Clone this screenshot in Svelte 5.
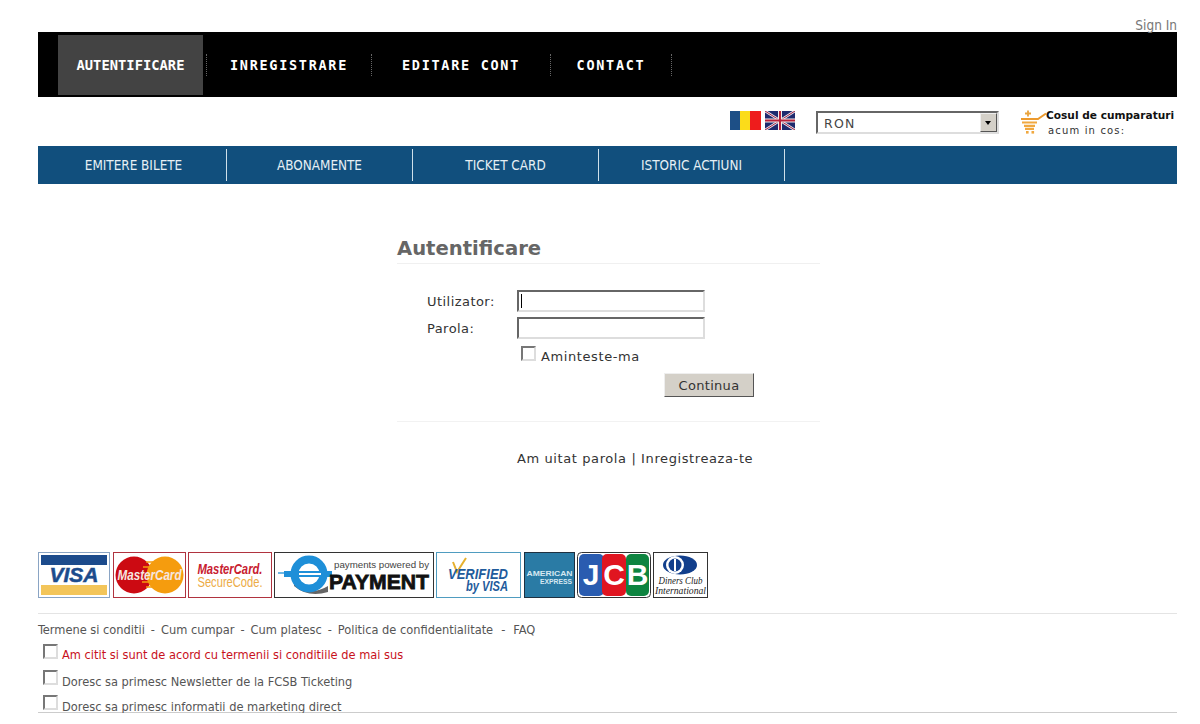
<script lang="ts">
    const mainTabs = [
        { label: 'AUTENTIFICARE', width: 145, active: true },
        { label: 'INREGISTRARE', width: 164, active: false },
        { label: 'EDITARE CONT', width: 178, active: false },
        { label: 'CONTACT', width: 120, active: false }
    ];
    const subTabs = ['EMITERE BILETE', 'ABONAMENTE', 'TICKET CARD', 'ISTORIC ACTIUNI'];
    const footerLinks = ['Termene si conditii', 'Cum cumpar', 'Cum platesc', 'Politica de confidentialitate', 'FAQ'];
    const checks = [
        { label: 'Am citit si sunt de acord cu termenii si conditiile de mai sus', warn: true },
        { label: 'Doresc sa primesc Newsletter de la FCSB Ticketing', warn: false },
        { label: 'Doresc sa primesc informatii de marketing direct', warn: false }
    ];
</script>

<div class="page">
    <div class="signin"><a href="#signin">Sign In</a></div>

    <nav class="topnav">
        {#each mainTabs as tab}
            <div class="toptab" class:active={tab.active} style="width: {tab.width}px">
                <a href="#tab">{tab.label}</a>
            </div>
            <i class="dots"></i>
        {/each}
    </nav>

    <div class="toolbar">
        <svg class="flag" width="31" height="19" viewBox="0 0 31 19">
            <rect width="11" height="19" fill="#1d4f86" />
            <rect x="10" width="11" height="19" fill="#fbdc1a" />
            <rect x="20" width="11" height="19" fill="#ee1c1c" />
        </svg>
        <svg class="flag uk" width="30" height="19" viewBox="0 0 30 19">
            <rect width="30" height="19" fill="#1e2a6e" />
            <path d="M0 0L30 19M30 0L0 19" stroke="#e8e8f0" stroke-width="2.6" />
            <path d="M0 0L30 19M30 0L0 19" stroke="#a02040" stroke-width="1" />
            <path d="M15 0V19M0 9.5H30" stroke="#eee" stroke-width="4" />
            <path d="M15 0V19M0 9.5H30" stroke="#b8203a" stroke-width="2" />
        </svg>
        <div class="currency">
            <span>RON</span>
            <b class="arrow"></b>
        </div>
        <svg class="cart" width="26" height="24" viewBox="0 0 26 24">
            <path d="M4 3.5H10M7 .5V6.5" stroke="#e9a33d" stroke-width="1.8" />
            <path d="M0 9H17L25 3.5" fill="none" stroke="#ec9a2e" stroke-width="2" />
            <path d="M1 12.5H16M3 15.8H14M4 18.8H13" stroke="#f0a840" stroke-width="2.2" />
            <rect x="5" y="21" width="2.6" height="2.6" fill="#f0a840" />
            <rect x="10.5" y="21" width="2.6" height="2.6" fill="#f0a840" />
        </svg>
        <div class="cartinfo">
            <strong>Cosul de cumparaturi</strong>
            <span>acum in cos:</span>
        </div>
    </div>

    <nav class="subnav">
        {#each subTabs as tab}
            <a href="#sub" class="subtab">{tab}</a>
        {/each}
    </nav>

    <main class="login">
        <h1>Autentificare</h1>
        <form class="fields">
            <label class="row">
                <span>Utilizator:</span>
                <input type="text" />
                <i class="caret"></i>
            </label>
            <label class="row">
                <span>Parola:</span>
                <input type="password" />
            </label>
            <label class="remember">
                <i class="box"></i>
                <span>Aminteste-ma</span>
            </label>
            <div class="actions">
                <button type="button">Continua</button>
            </div>
        </form>
        <p class="links"><a href="#forgot">Am uitat parola</a> | <a href="#register">Inregistreaza-te</a></p>
    </main>

    <div class="logos">
        <!-- Visa -->
        <svg width="73" height="46" viewBox="0 0 73 46">
            <rect x=".5" y=".5" width="71" height="45" fill="#fff" stroke="#8aa4c4" />
            <rect x="3" y="3" width="66" height="10" fill="#1c4b8c" />
            <rect x="3" y="33" width="66" height="10" fill="#f3c55a" />
            <text x="36" y="30" class="lg visa" text-anchor="middle">VISA</text>
        </svg>
        <!-- MasterCard -->
        <svg width="73" height="46" viewBox="0 0 73 46">
            <rect x=".5" y=".5" width="72" height="45" fill="#fff" stroke="#b0333f" />
            <circle cx="21" cy="23" r="18.5" fill="#cc0a12" />
            <circle cx="52" cy="23" r="18.5" fill="#f59c0e" />
            <path d="M33 10H40M30 15H40M29 30H40M33 35H40" stroke="#f59c0e" stroke-width="1.4" />
            <text x="36.5" y="28" class="lg mc" text-anchor="middle" textLength="64" lengthAdjust="spacingAndGlyphs">MasterCard</text>
        </svg>
        <!-- MasterCard SecureCode -->
        <svg width="84" height="46" viewBox="0 0 84 46">
            <rect x=".5" y=".5" width="83" height="45" fill="#fff" stroke="#b0333f" />
            <text x="42" y="22" class="lg sc red" text-anchor="middle" textLength="65" lengthAdjust="spacingAndGlyphs">MasterCard.</text>
            <text x="42" y="35" class="lg sc amber" text-anchor="middle" textLength="65" lengthAdjust="spacingAndGlyphs">SecureCode.</text>
        </svg>
        <!-- ePayment -->
        <svg width="160" height="46" viewBox="0 0 160 46">
            <rect x=".5" y=".5" width="159" height="45" fill="#fff" stroke="#333" />
            <path d="M4 21H16" stroke="#3c9fdc" stroke-width="1.5" />
            <path d="M20 30Q34 46 54 34L54 40Q34 46 20 34Z" fill="#666" />
            <circle cx="35" cy="22" r="14.5" fill="#fff" stroke="#1e8fd8" stroke-width="8" />
            <rect x="10" y="19" width="48" height="6" fill="#1e8fd8" />
            <rect x="25" y="21" width="22" height="2" fill="#fff" />
            <text x="155" y="16" class="lg pw" text-anchor="end" textLength="95" lengthAdjust="spacingAndGlyphs">payments powered by</text>
            <text x="155" y="37" class="lg pay" text-anchor="end" textLength="100" lengthAdjust="spacingAndGlyphs">PAYMENT</text>
        </svg>
        <!-- Verified by Visa -->
        <svg width="86" height="46" viewBox="0 0 86 46">
            <rect x=".5" y=".5" width="84" height="45" fill="#fff" stroke="#4f9cc0" />
            <path d="M17 10L21 20L30 6" fill="none" stroke="#e6b02e" stroke-width="2" />
            <text x="72" y="27" class="lg vbv" text-anchor="end" textLength="60" lengthAdjust="spacingAndGlyphs">VERIFIED</text>
            <text x="72" y="39" class="lg vbv" text-anchor="end" textLength="42" lengthAdjust="spacingAndGlyphs">by VISA</text>
        </svg>
        <!-- American Express -->
        <svg width="51" height="46" viewBox="0 0 51 46">
            <rect x=".5" y=".5" width="50" height="45" fill="#2a7ba5" stroke="#1e3040" />
            <text x="25.5" y="24" class="lg amex" text-anchor="middle" textLength="46" lengthAdjust="spacingAndGlyphs">AMERICAN</text>
            <text x="32" y="32" class="lg amex" text-anchor="middle" textLength="32" lengthAdjust="spacingAndGlyphs">EXPRESS</text>
        </svg>
        <!-- JCB -->
        <svg width="74" height="46" viewBox="0 0 74 46">
            <rect x=".5" y=".5" width="73" height="45" rx="4" fill="#fff" stroke="#333" />
            <rect x="2" y="2" width="25" height="42" rx="5" fill="#2a5cb0" />
            <rect x="25" y="2" width="24" height="42" rx="5" fill="#e01520" />
            <rect x="49" y="2" width="23" height="42" rx="5" fill="#0e8440" />
            <text x="14" y="33" class="lg jcb" text-anchor="middle">J</text>
            <text x="37" y="33" class="lg jcb" text-anchor="middle">C</text>
            <text x="60.5" y="33" class="lg jcb" text-anchor="middle">B</text>
        </svg>
        <!-- Diners Club -->
        <svg width="55" height="46" viewBox="0 0 55 46">
            <rect x=".5" y=".5" width="54" height="45" fill="#fff" stroke="#333" />
            <ellipse cx="27" cy="13" rx="17" ry="9.5" fill="#123f8c" />
            <circle cx="22" cy="13" r="9" fill="#fff" />
            <circle cx="22" cy="13" r="6.5" fill="#123f8c" />
            <rect x="21" y="7" width="2" height="12" fill="#fff" />
            <text x="27.5" y="32" class="lg dc" text-anchor="middle" textLength="44" lengthAdjust="spacingAndGlyphs">Diners Club</text>
            <text x="27.5" y="42" class="lg dc" text-anchor="middle" textLength="51" lengthAdjust="spacingAndGlyphs">International</text>
        </svg>
    </div>

    <footer class="foot">
        <div class="footlinks">
            {#each footerLinks as link, i}
                {#if i > 0}<span class="sep">-</span>{/if}
                <a href="#foot">{link}</a>
            {/each}
        </div>
        {#each checks as check}
            <label class="check" class:warn={check.warn}>
                <i class="box"></i>
                <span>{check.label}</span>
            </label>
        {/each}
    </footer>
</div>

<style>
    :global(body) {
        margin: 0;
        background: #fff;
        overflow: hidden;
    }
    a {
        color: inherit;
        text-decoration: none;
    }
    .page {
        width: 1139px;
        margin-left: 38px;
        font-family: "DejaVu Sans", Verdana, sans-serif;
    }
    .signin {
        height: 32px;
        box-sizing: border-box;
        padding-top: 17px;
        text-align: right;
        font: 13.5px/16px "DejaVu Sans Condensed", "DejaVu Sans", sans-serif;
        color: #777;
    }

    /* black main menu */
    .topnav {
        height: 65px;
        background: #000;
        display: flex;
        align-items: flex-start;
        padding: 3px 0 0 20px;
        box-sizing: border-box;
    }
    .toptab {
        height: 60px;
        flex: none;
        display: flex;
        align-items: center;
        justify-content: center;
        color: #fff;
        font-family: "DejaVu Sans Mono", monospace;
        font-size: 13.5px;
        font-weight: 700;
        letter-spacing: 1.7px;
    }
    .toptab.active {
        background: #434343;
        font-size: 13.8px;
        letter-spacing: 0;
        margin-right: 3px;
    }
    .dots {
        width: 0;
        height: 22px;
        margin: 19px 0 0 0;
        border-left: 1px dotted #666;
        flex: none;
    }

    /* flags, currency, cart */
    .toolbar {
        height: 49px;
        display: flex;
        align-items: flex-start;
        font-size: 11px;
    }
    .flag {
        flex: none;
        margin-top: 14px;
    }
    .flag:first-child {
        margin-left: 692px;
    }
    .uk {
        margin-left: 4px;
    }
    .currency {
        position: relative;
        width: 183px;
        height: 23px;
        box-sizing: border-box;
        margin: 14px 0 0 21px;
        padding-left: 6px;
        border: 2px solid;
        border-color: #666 #ddd #ddd #666;
        font-size: 12.5px;
        line-height: 21px;
        letter-spacing: 1.2px;
        color: #444;
    }
    .arrow {
        position: absolute;
        right: 0;
        top: 0;
        width: 17px;
        height: 19px;
        box-sizing: border-box;
        background: #d4d0c8;
        border: 1px solid;
        border-color: #eee #555 #555 #eee;
    }
    .arrow::after {
        content: '';
        position: absolute;
        left: 4px;
        top: 7px;
        border: 3.5px solid transparent;
        border-top: 4px solid #000;
        border-bottom: 0;
    }
    .cart {
        flex: none;
        margin: 13px 0 0 22px;
    }
    .cartinfo {
        margin: 11px 0 0 -1px;
        display: flex;
        flex-direction: column;
        white-space: nowrap;
        line-height: 15px;
    }
    .cartinfo strong {
        font-size: 10.6px;
        color: #111;
    }
    .cartinfo span {
        font-size: 10px;
        letter-spacing: 1.15px;
        padding-left: 2px;
        color: #333;
    }

    /* blue sub menu */
    .subnav {
        height: 38px;
        background: #114f7d;
        display: flex;
        align-items: center;
    }
    .subtab {
        width: 186px;
        height: 32px;
        flex: none;
        box-sizing: border-box;
        border-right: 1px solid #cfe0ea;
        display: flex;
        align-items: center;
        justify-content: center;
        color: #e6eff5;
        font: 13.4px "DejaVu Sans Condensed", "DejaVu Sans", sans-serif;
    }
    .subtab:first-child {
        width: 189px;
        padding-left: 3px;
    }

    /* login box */
    .login {
        width: 423px;
        height: 368px;
        margin-left: 359px;
        box-sizing: border-box;
        padding-top: 51px;
        color: #333;
        font-size: 13px;
    }
    h1 {
        margin: 0;
        height: 28px;
        border-bottom: 1px solid #f0f0f0;
        font-size: 19.6px;
        line-height: 28px;
        font-weight: 700;
        color: #666;
    }
    .fields {
        height: 158px;
        box-sizing: border-box;
        padding-top: 26px;
        border-bottom: 1px solid #f2f2f2;
    }
    .row {
        position: relative;
        display: flex;
        align-items: center;
        height: 22px;
        margin-bottom: 5px;
        padding-left: 30px;
    }
    .row span {
        width: 90px;
        flex: none;
        letter-spacing: 0.45px;
    }
    input {
        width: 188px;
        height: 22px;
        box-sizing: border-box;
        padding: 0;
        border: 2px solid;
        border-color: #666 #ddd #ddd #666;
        outline: 0;
        background: #fff;
    }
    .caret {
        position: absolute;
        left: 124px;
        top: 4px;
        width: 1px;
        height: 14px;
        background: #000;
    }
    .remember {
        display: flex;
        align-items: center;
        gap: 5px;
        margin: 8px 0 0 124px;
        letter-spacing: 0.6px;
        height: 18px;
    }
    .box {
        display: block;
        flex: none;
        width: 15px;
        height: 15px;
        box-sizing: border-box;
        border: 2px solid;
        border-color: #777 #ddd #ddd #777;
        background: #fff;
    }
    .remember .box {
        margin-top: -5px;
    }
    .remember span {
        padding-top: 1px;
    }
    .actions {
        display: flex;
        justify-content: flex-end;
        padding-right: 66px;
        margin-top: 8px;
    }
    button {
        width: 90px;
        height: 24px;
        box-sizing: border-box;
        padding: 0;
        font: 13px "DejaVu Sans", sans-serif;
        letter-spacing: 0.3px;
        color: #333;
        background: #d4d0c8;
        border: 1px solid;
        border-color: #eee #555 #555 #eee;
    }
    .links {
        margin: 29px 0 0 120px;
        line-height: 16px;
        letter-spacing: 0.6px;
        white-space: nowrap;
    }

    /* card logos */
    .logos {
        display: flex;
        gap: 2px;
        height: 61px;
        border-bottom: 1px solid #e4e4e4;
    }
    .logos svg {
        flex: none;
        display: block;
    }
    .lg {
        font-family: "Liberation Sans", Arial, sans-serif;
        font-weight: 700;
    }
    .visa {
        font-size: 21px;
        font-style: italic;
        fill: #1c4b8c;
        stroke: #1c4b8c;
        stroke-width: .5px;
    }
    .mc {
        font-size: 14px;
        font-style: italic;
        fill: #f5e6e0;
    }
    .sc {
        font-size: 14px;
        font-style: italic;
    }
    .red {
        fill: #c8202f;
    }
    .amber {
        fill: #ecab46;
        font-style: normal;
        font-weight: 400;
    }
    .pw {
        font-size: 9px;
        fill: #444;
        font-weight: 400;
    }
    .pay {
        font-size: 21px;
        font-weight: 900;
        fill: #111;
        stroke: #111;
        stroke-width: .8px;
    }
    .vbv {
        font-size: 14px;
        font-style: italic;
        fill: #1f5b9c;
    }
    .amex {
        font-size: 7px;
        fill: #d5e8f2;
    }
    .jcb {
        font-size: 30px;
        fill: #fff;
    }
    .dc {
        font-family: "Liberation Serif", serif;
        font-size: 11px;
        font-style: italic;
        font-weight: 400;
        fill: #222;
    }

    /* footer */
    .foot {
        color: #555;
        font: 12.7px/16px "DejaVu Sans Condensed", "DejaVu Sans", sans-serif;
    }
    .footlinks {
        display: flex;
        gap: 6px;
        padding-top: 8px;
        height: 28px;
        box-sizing: border-box;
        white-space: nowrap;
    }
    .footlinks a:last-child {
        margin-left: 2px;
    }
    .sep:nth-last-child(2) {
        margin-left: 2px;
    }
    .check {
        display: flex;
        align-items: center;
        gap: 4px;
        height: 26.5px;
        padding-left: 5px;
    }
    .check .box {
        margin-top: -8px;
    }
    .check:last-child {
        height: 18px;
        box-sizing: border-box;
        align-items: flex-start;
        border-bottom: 1px solid #ccc;
    }
    .check:last-child .box {
        margin-top: 0;
    }
    .check:last-child span {
        padding-top: 4px;
    }
    .warn {
        color: #c8111c;
    }
</style>
